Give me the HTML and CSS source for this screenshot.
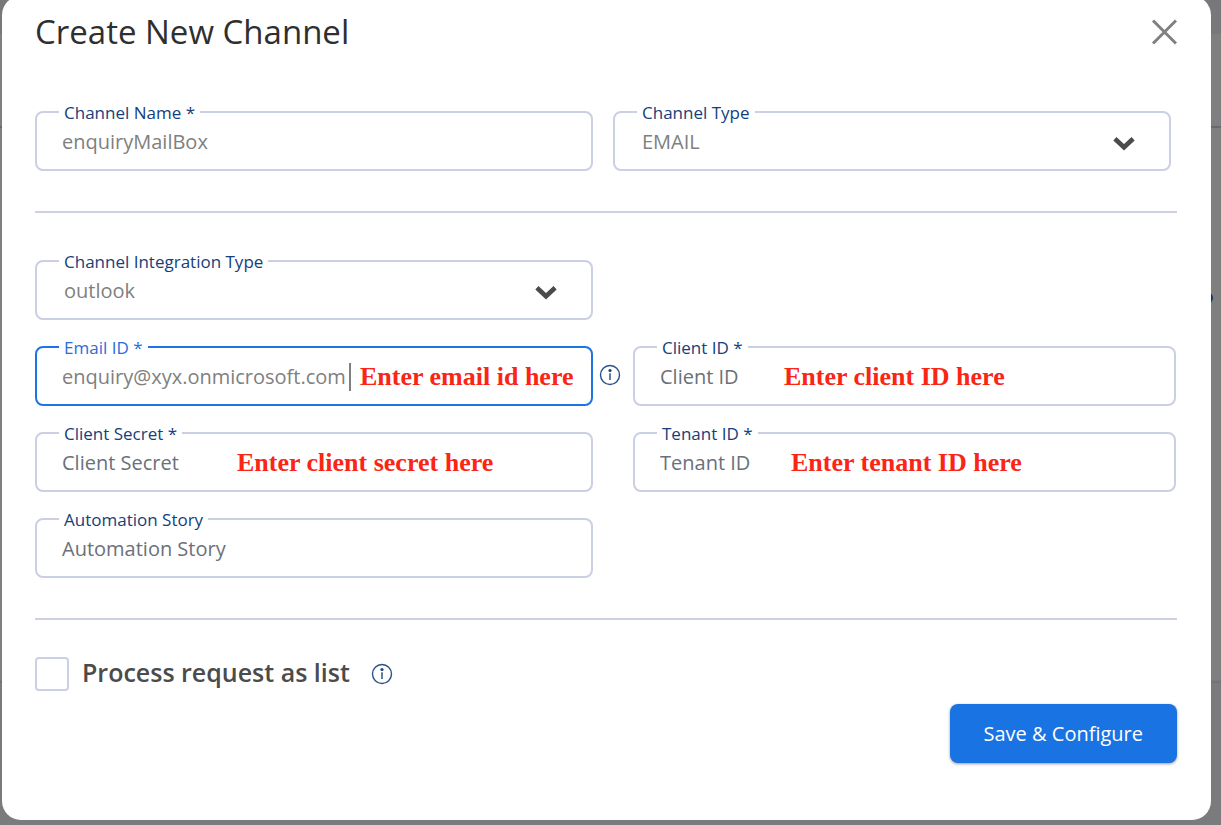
FILE: index.html
```html
<!DOCTYPE html>
<html lang="en">
<head>
<meta charset="utf-8">
<title>Create New Channel</title>
<link rel="stylesheet" href="styles.css">
</head>
<body>
<div class="page-rule page-rule-top"></div>
<div class="page-rule page-rule-bottom"></div>
<div class="page-dot"></div>
<main class="modal" role="dialog" aria-labelledby="modal-title">
  <header class="modal-header">
    <h1 class="modal-title" id="modal-title">Create New Channel</h1>
    <button class="close" type="button" aria-label="Close">
      <svg width="26" height="26" viewBox="0 0 26 26" fill="none" stroke="#808080" stroke-width="3"><path d="M2 1.500l23 23M25 1.500l-23 23"/></svg>
    </button>
  </header>
  <form class="form">
    <section class="row row-even">
      <div class="field">
        <label class="field-label" for="name">Channel Name *</label>
        <input class="control" id="name" type="text" value="enquiryMailBox">
      </div>
      <div class="field">
        <label class="field-label" for="type">Channel Type</label>
        <select class="control control-select" id="type"><option>EMAIL</option></select>
        <svg class="chevron" width="22" height="15" viewBox="0 0 22 15"><path d="M1.900 2.800L11 11.300l9.100-8.500" fill="none" stroke="#4b4b4b" stroke-width="4.600"/></svg>
      </div>
    </section>
    <hr class="divider">
    <section class="row row-info">
      <div class="field">
        <label class="field-label" for="integration">Channel Integration Type</label>
        <select class="control control-select" id="integration"><option>outlook</option></select>
        <svg class="chevron" width="22" height="15" viewBox="0 0 22 15"><path d="M1.900 2.800L11 11.300l9.100-8.500" fill="none" stroke="#4b4b4b" stroke-width="4.600"/></svg>
      </div>
      <div class="field field-active first">
        <label class="field-label" for="email">Email ID *</label>
        <input class="control" id="email" type="text" value="enquiry@xyx.onmicrosoft.com">
        <span class="caret"></span>
        <span class="note note-email">Enter email id here</span>
      </div>
      <button class="info info-field" type="button" aria-label="About Email ID">
        <svg width="22" height="22" viewBox="0 0 22 22"><circle cx="11" cy="11" r="9.500" fill="none" stroke="#2a5289" stroke-width="1.400"/><circle cx="11" cy="6.500" r="1.600" fill="#1c457f"/><path d="M11 9.300v6.700" stroke="#2a5289" stroke-width="1.500"/></svg>
      </button>
      <div class="field">
        <label class="field-label" for="client">Client ID *</label>
        <input class="control" id="client" type="text" placeholder="Client ID">
        <span class="note note-client">Enter client ID here</span>
      </div>
      <div class="field first">
        <label class="field-label" for="secret">Client Secret *</label>
        <input class="control" id="secret" type="text" placeholder="Client Secret">
        <span class="note note-secret">Enter client secret here</span>
      </div>
      <div class="field last">
        <label class="field-label" for="tenant">Tenant ID *</label>
        <input class="control" id="tenant" type="text" placeholder="Tenant ID">
        <span class="note note-tenant">Enter tenant ID here</span>
      </div>
      <div class="field first">
        <label class="field-label" for="story">Automation Story</label>
        <input class="control" id="story" type="text" placeholder="Automation Story">
      </div>
    </section>
    <hr class="divider">
    <div class="check-row">
      <input class="check" id="list" type="checkbox">
      <label class="check-label" for="list">Process request as list</label>
      <button class="info" type="button" aria-label="About process request as list">
        <svg width="22" height="22" viewBox="0 0 22 22"><circle cx="11" cy="11" r="9.500" fill="none" stroke="#2a5289" stroke-width="1.400"/><circle cx="11" cy="6.500" r="1.600" fill="#1c457f"/><path d="M11 9.300v6.700" stroke="#2a5289" stroke-width="1.500"/></svg>
      </button>
    </div>
    <div class="actions"><button class="save" type="button">Save &amp; Configure</button></div>
  </form>
</main>
</body>
</html>
```
FILE: styles.css
```css
* {
  box-sizing: border-box;
}

body {
  margin: 0;
  padding: 0 10px 5px 2px;
  min-height: 100vh;
  display: flex;
  background: linear-gradient(#78787b 34px, #7f7f7f 34px, #7f7f7f 680px, #7b7b7d 680px);
  font-family: "Open Sans", "Noto Sans", sans-serif;
}

.page-rule {
  position: absolute;
  left: 0;
  right: 0;
  height: 2px;
  background: #666b70;
}

.page-rule-top {
  top: 126px;
}

.page-rule-bottom {
  top: 681px;
  background: #6e757b;
}

.page-dot {
  position: absolute;
  right: 8px;
  top: 292px;
  width: 12px;
  height: 12px;
  border-radius: 50%;
  background: #0c3771;
}

.modal {
  position: relative;
  flex: 1;
  min-width: 0;
  margin-top: -4px;
  padding: 14px 34px 56px 33px;
  border-radius: 19px;
  background: #fff;
}

.modal-header {
  display: flex;
  align-items: center;
  justify-content: space-between;
}

.modal-title {
  margin: 0;
  font-size: 33px;
  font-weight: 400;
  line-height: 44px;
  color: #2f2f2f;
}

.close,
.info {
  display: flex;
  padding: 0;
  border: 0;
  background: none;
  cursor: pointer;
}

.row {
  display: grid;
}

.row-even {
  grid-template-columns: 1fr 1fr;
  gap: 20px;
  padding: 57px 6px 0 0;
}

.row-info {
  grid-template-columns: minmax(0, 558fr) 40px minmax(0, 543fr);
  row-gap: 26px;
  padding-right: 1px;
}

.first {
  grid-column: 1;
}

.last {
  grid-column: 3;
}

.field {
  position: relative;
  min-width: 0;
  height: 60px;
  border: 2px solid #cbcfe3;
  border-radius: 8px;
}

.field-active {
  border-color: #1d74e3;
}

.field-label {
  position: absolute;
  left: 22px;
  top: -12px;
  padding: 0 5px;
  background: #fff;
  font-size: 17px;
  line-height: 24px;
  color: #153e7b;
  white-space: nowrap;
}

.field-active .field-label {
  color: #2a6ce0;
}

.control {
  display: block;
  width: 100%;
  height: 56px;
  padding: 0 25px 0 25px;
  border: 0;
  border-radius: 8px;
  outline: 0;
  background: transparent;
  font-family: inherit;
  font-size: 20px;
  line-height: 28px;
  color: #808080;
}

.control::placeholder {
  color: #6b7079;
  opacity: 1;
}

.control-select {
  padding: 2px 27px 0;
  appearance: none;
}

.chevron {
  position: absolute;
  right: 34px;
  top: 23px;
  pointer-events: none;
}

.caret {
  position: absolute;
  left: 312px;
  top: 15px;
  width: 2px;
  height: 28px;
  background: #808080;
}

.note {
  position: absolute;
  top: 15px;
  font-family: "Liberation Serif", serif;
  font-size: 26px;
  font-weight: 700;
  line-height: 28px;
  color: #fb2515;
  white-space: nowrap;
  pointer-events: none;
}

.note-email {
  left: 323px;
}

.note-client {
  left: 149px;
}

.note-secret {
  left: 200px;
}

.note-tenant {
  left: 156px;
}

.info-field {
  align-self: center;
  justify-self: start;
  margin: 0 0 2px 6px;
}

.divider {
  margin: 40px 0 47px;
  border: 0;
  border-top: 2px solid #ccd2e1;
}

.row-info + .divider {
  margin-bottom: 37px;
}

.check-row {
  display: flex;
  align-items: center;
}

.check {
  width: 34px;
  height: 34px;
  margin: 0 13px 0 0;
  appearance: none;
  border: 2px solid #cbcfe3;
  border-radius: 4px;
}

.check-label {
  margin-right: 21px;
  padding-bottom: 4px;
  font-size: 25px;
  font-weight: 600;
  line-height: 30px;
  color: #4b4b4b;
}

.actions {
  display: flex;
  justify-content: flex-end;
  margin-top: 13px;
}

.save {
  padding: 16px 34px 15px;
  border: 0;
  border-radius: 8px;
  background: #1a73e3;
  box-shadow: 0 1px 3px rgba(0, 0, 0, 0.4);
  font-family: inherit;
  font-size: 20px;
  font-weight: 500;
  line-height: 28px;
  color: #fff;
}
```
